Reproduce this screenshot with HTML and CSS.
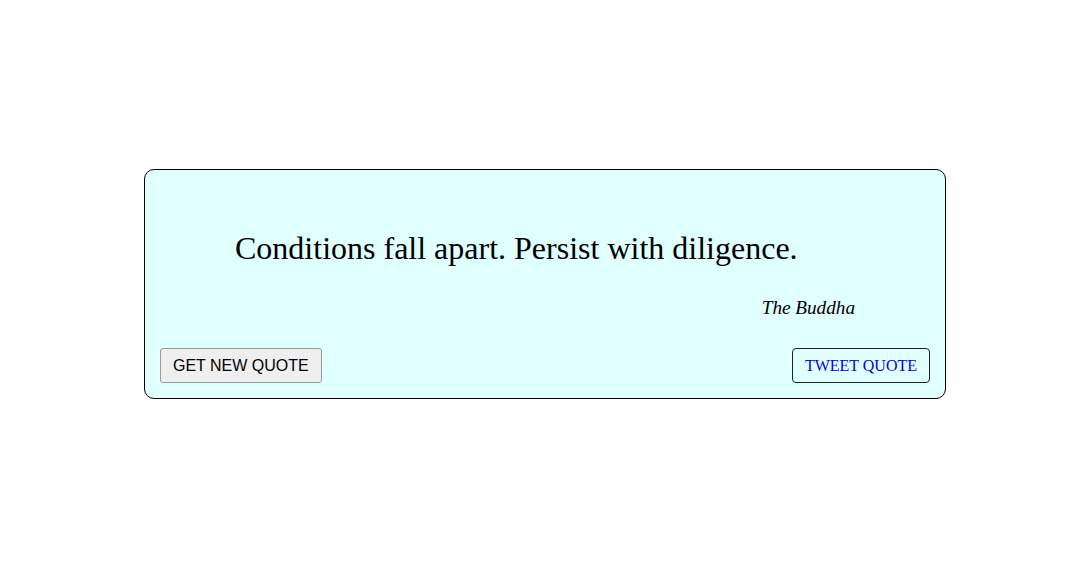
FILE: index.html
```html
<!DOCTYPE html>
<html>
<head>
<meta charset="utf-8">
<link rel="stylesheet" href="styles.css">
</head>
<body>
<div class="page">
  <div class="card">
    <p class="quote">Conditions fall apart. Persist with diligence.</p>
    <p class="author">The Buddha</p>
    <div class="actions">
      <button class="btn-new">GET NEW QUOTE</button>
      <a class="btn-tweet" href="#">TWEET QUOTE</a>
    </div>
  </div>
</div>
</body>
</html>
```

FILE: styles.css
```css
html, body {
  margin: 0;
  padding: 0;
  background: #ffffff;
}
.page {
  height: 567px;
  box-sizing: border-box;
  padding-left: 11px;
  padding-top: 1px;
  display: flex;
  align-items: center;
  justify-content: center;
}
.card {
  width: 802px;
  height: 230px;
  box-sizing: border-box;
  background: #e0ffff;
  border: 1px solid #000;
  border-radius: 10px;
  display: flex;
  flex-direction: column;
  padding: 0 15px 15px 15px;
  font-family: "Liberation Serif", "Times New Roman", serif;
}
.quote {
  margin: 60px 0 0 75px;
  font-size: 32px;
  line-height: 36px;
  color: #000;
}
.author {
  margin: 31px 75px 0 0;
  text-align: right;
  font-style: italic;
  font-size: 19.2px;
  line-height: 22px;
}
.actions {
  margin-top: auto;
  display: flex;
  justify-content: space-between;
  align-items: center;
}
.btn-new {
  font-family: "Liberation Sans", Arial, sans-serif;
  font-size: 16px;
  height: 35px;
  padding: 0 12px;
  background: #efefef;
  border: 1px solid #999;
  border-radius: 3px;
  color: #000;
}
.btn-tweet {
  font-family: "Liberation Serif", "Times New Roman", serif;
  font-size: 16px;
  height: 35px;
  box-sizing: border-box;
  display: flex;
  align-items: center;
  padding: 0 12px;
  border: 1px solid #222;
  border-radius: 4px;
  color: #0000ee;
  text-decoration: none;
}
```
